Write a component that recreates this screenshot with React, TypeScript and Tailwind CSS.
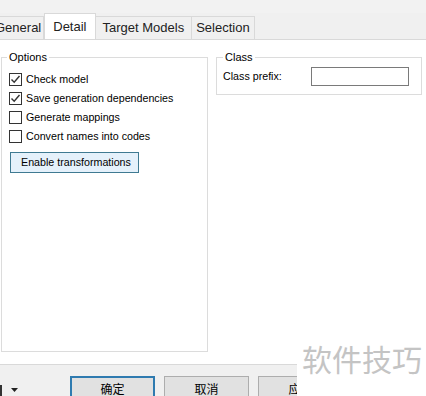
import React from "react";

function Check({ checked, label }: { checked?: boolean; label: string }) {
  return (
    <div className="flex h-[19px] items-center">
      <div className="flex h-[13px] w-[13px] items-center justify-center border border-[#333] bg-white">
        {checked && (
          <svg width="11" height="11" viewBox="0 0 11 11">
            <path d="M1.5 5.5 L4.2 8.3 L9.5 2" fill="none" stroke="#333" strokeWidth="1.4" />
          </svg>
        )}
      </div>
      <span className="ml-[4px] text-[10.7px] text-black">{label}</span>
    </div>
  );
}

export default function App() {
  const font = { fontFamily: '"Liberation Sans", "Noto Sans CJK SC", sans-serif' };
  return (
    <div className="relative h-[396px] w-[426px] overflow-hidden bg-[#f0f0f0]" style={font}>
      <div className="h-[13px] bg-[#f2f2f2]" />
      {/* tabs */}
      <div className="flex h-[26px] items-end text-[13px] text-[#222]">
        <div className="ml-[-10px] flex h-[23px] items-center border border-b-0 border-[#d9d9d9] pl-[4px] pr-[2px]">General</div>
        <div className="flex h-[26px] items-center border border-b-0 border-[#d9d9d9] bg-white px-[8px]">Detail</div>
        <div className="flex h-[23px] items-center border border-b-0 border-l-0 border-[#d9d9d9] px-[7px]">Target Models</div>
        <div className="flex h-[23px] items-center border border-b-0 border-l-0 border-[#d9d9d9] px-[4px]">Selection</div>
      </div>
      {/* panel */}
      <div className="flex h-[326px] items-start border-b border-t border-[#d9d9d9] bg-white pl-[1px] pt-[11px]">
        <fieldset className="h-[301px] w-[207px] border border-[#dcdcdc]">
          <legend className="ml-[5px] px-[2px] text-[11px] leading-[13px] text-black">Options</legend>
          <div className="pl-[7px] pt-[6px]">
            <Check checked label="Check model" />
            <Check checked label="Save generation dependencies" />
            <Check label="Generate mappings" />
            <Check label="Convert names into codes" />
            <button className="mt-[6px] ml-[1px] flex h-[21px] w-[129px] items-center border border-[#3f7a92] bg-[#e5f1fb] pl-[10px] text-[10.7px] text-black">
              Enable transformations
            </button>
          </div>
        </fieldset>
        <fieldset className="ml-[8px] h-[44px] w-[206px] border border-[#dcdcdc]">
          <legend className="ml-[6px] px-[2px] text-[11px] leading-[13px] text-black">Class</legend>
          <div className="flex items-center pl-[6px] pt-[3px]">
            <span className="w-[88px] text-[10.7px] text-black">Class prefix:</span>
            <div className="h-[19px] w-[98px] border border-[#7a7a7a] bg-white" />
          </div>
        </fieldset>
      </div>
      {/* bottom */}
      <div className="flex items-start pt-[11px] text-[12px] text-black">
        <div className="mt-[9px] h-[11px] w-[2px] bg-[#333]" />
        <svg className="ml-[9px] mt-[12px]" width="7" height="4" viewBox="0 0 7 4">
          <path d="M0 0 H7 L3.5 4 Z" fill="#222" />
        </svg>
        <div className="ml-[52px] flex h-[27px] w-[85px] items-center justify-center border-2 border-[#2f7bb0] bg-[#e1e1e1]">确定</div>
        <div className="ml-[9px] flex h-[27px] w-[85px] items-center justify-center border border-[#adadad] bg-[#e1e1e1]">取消</div>
        <div className="ml-[9px] flex h-[27px] w-[85px] items-center justify-center border border-[#adadad] bg-[#e1e1e1]">应用</div>
      </div>
      {/* watermark */}
      <div className="absolute left-[297px] top-[337px] flex h-[59px] w-[129px] items-start bg-white pl-[5px] pt-[3px]">
        <span className="text-[30px] leading-[36px] text-[#c4c4c4]" style={{ fontFamily: '"Noto Sans CJK SC", sans-serif' }}>软件技巧</span>
      </div>
    </div>
  );
}
